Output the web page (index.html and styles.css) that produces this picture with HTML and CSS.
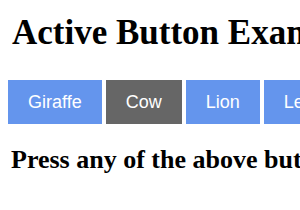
FILE: index.html
```html
<!DOCTYPE html>
<html lang="en">
<head>
    <meta charset="UTF-8">
    <meta name="viewport" content="width=device-width, initial-scale=1.0">
    <title>Active Button</title>
    <link rel="stylesheet" href="styles.css">
</head>
<body>
    <h1>Active Button Example</h1>
    <div class="btn-group">
        <button class="btn">Giraffe</button>
        <button class="btn active">Cow</button>
        <button class="btn">Lion</button>
        <button class="btn">Leopard</button>
    </div>
    <h2>Press any of the above buttons to set it active</h2>
</body>
</html>
```

FILE: styles.css
```css
body {
    margin: 0;
    padding: 0 8px;
    font-family: 'Liberation Serif', 'Times New Roman', serif;
    color: #000;
    background-color: #fff;
    white-space: nowrap;
    overflow: hidden;
}
h1 {
    margin: 13px 0 27px;
    padding-left: 4px;
    font-size: 35px;
    line-height: 40px;
}
h2 {
    margin: 20px 0 0;
    padding-left: 3px;
    font-size: 26px;
    line-height: 31px;
}
.btn-group {
    font-size: 16px;
}
.btn {
    border: none;
    outline: none;
    padding: 12px 20px;
    background-color: #6495ed;
    color: white;
    font-family: 'Liberation Sans', Arial, sans-serif;
    font-size: 18px;
    line-height: 20px;
    cursor: pointer;
}
.btn.active, .btn:hover {
    background-color: #666;
}
```
